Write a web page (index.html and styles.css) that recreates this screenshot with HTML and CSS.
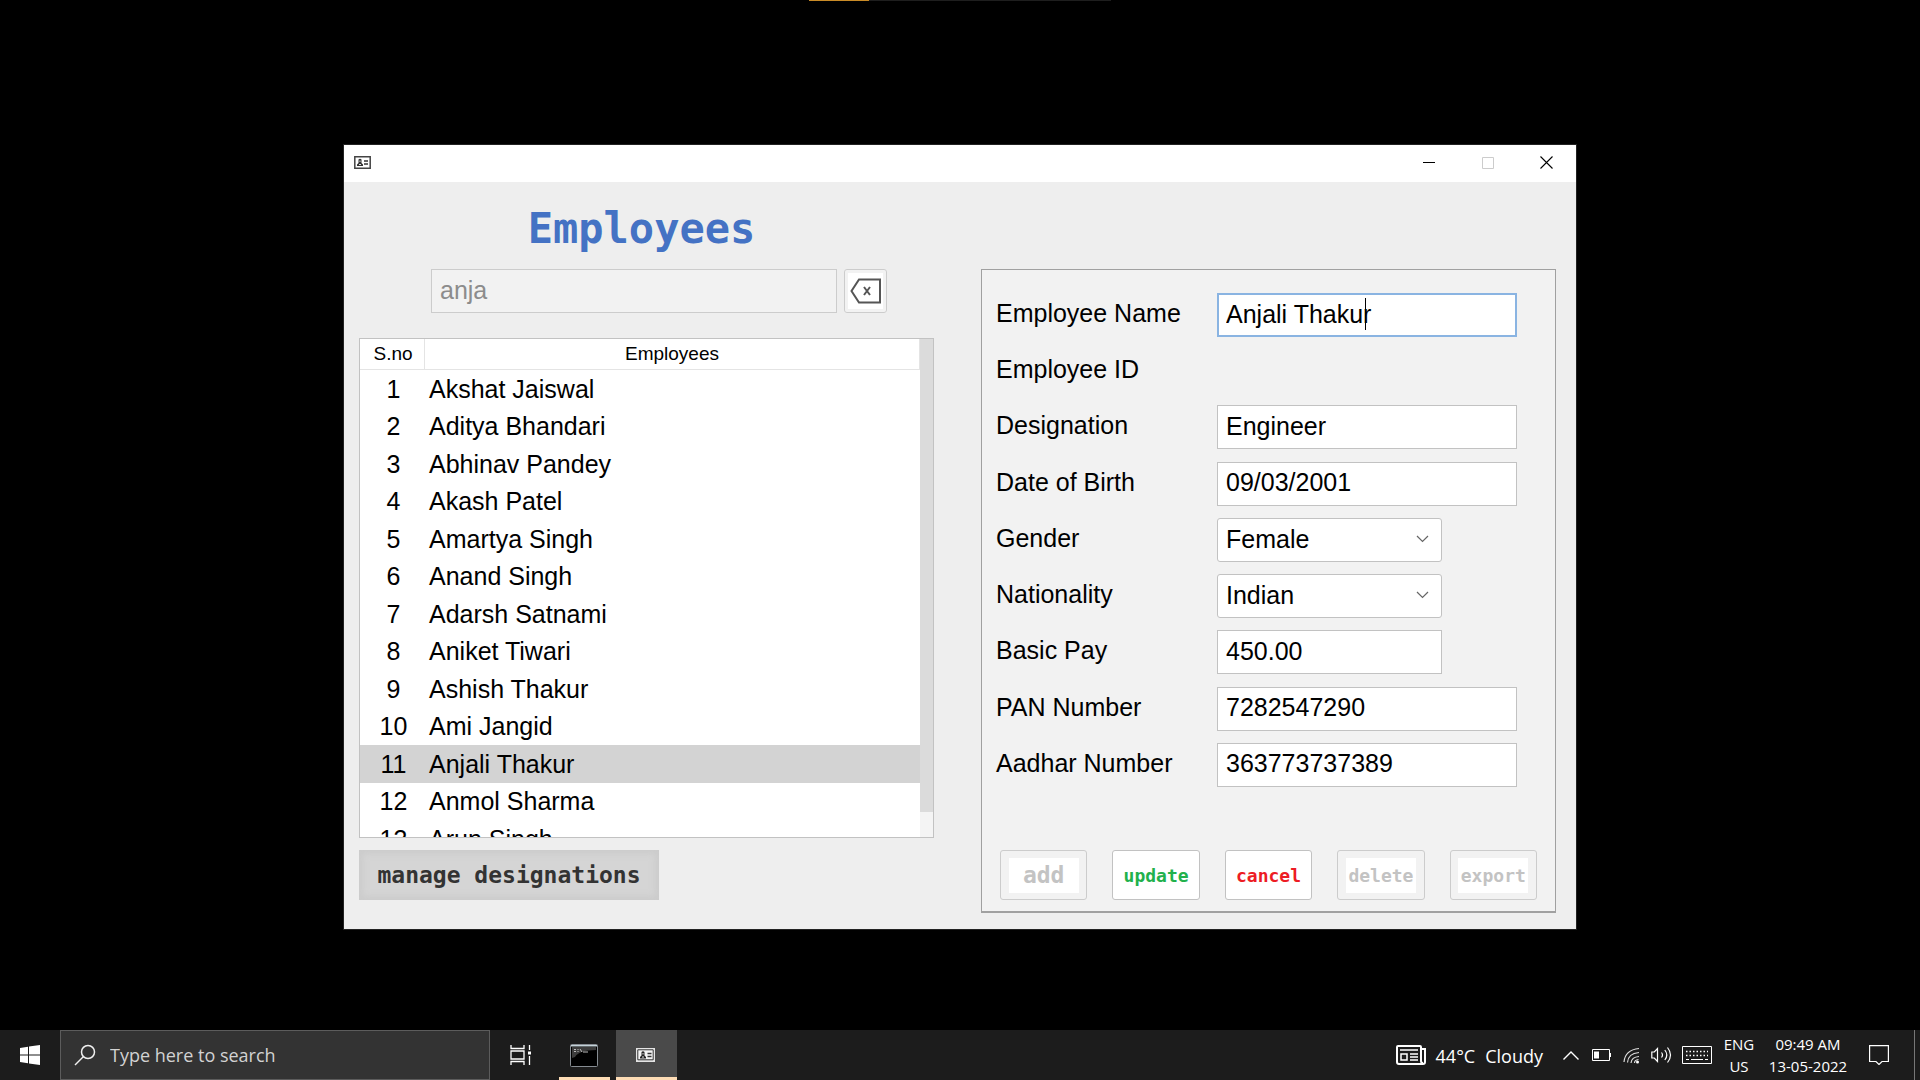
FILE: index.html
```html
<!DOCTYPE html>
<html lang="en">
<head>
<meta charset="utf-8">
<title>Employees</title>
<link rel="stylesheet" href="styles.css">
</head>
<body>
<div class="progress"><span class="progress-value"></span></div>
<main class="desktop">
  <section class="window">
    <header class="titlebar">
      <svg class="app-icon" width="17" height="13" viewBox="0 0 17 13"><path d="M.8.800h15.400v11.400H.8z" fill="#fff" stroke="#444" stroke-width="1.500"/><path d="M3 10V8.500L4.500 7V3.500Q6 2 7.500 3.500V7L9 8.500V10z" fill="#333"/><path d="M5.500 4.500h1v1.500h-1zM5 8h2v1H5z" fill="#ddd"/><path d="M10 5h4M10 8h4" stroke="#333" stroke-width="1.500"/></svg>
      <div class="window-controls">
        <button type="button" aria-label="Minimize"><svg width="12" height="12" viewBox="0 0 12 12"><path d="M0 5.500h12" stroke="#000"/></svg></button>
        <button type="button" aria-label="Maximize" disabled><svg width="12" height="12" viewBox="0 0 12 12"><path d="M.5.5h11v11H.5z" fill="none" stroke="#ccc"/></svg></button>
        <button type="button" aria-label="Close"><svg width="13" height="13" viewBox="0 0 13 13"><path d="M.5.5l12 12M12.500.5l-12 12" stroke="#000" stroke-width="1.100"/></svg></button>
      </div>
    </header>
    <div class="content">
      <section class="list-side">
        <h1>Employees</h1>
        <form class="search">
          <input class="field" type="text" value="anja" aria-label="Search employees" disabled>
          <button class="clear" type="button" aria-label="Clear search"><svg width="32" height="26" viewBox="0 0 32 26" fill="none" stroke="#555" stroke-width="2"><path d="M9 1.500h21v23H9L1.500 13z"/><path d="M14 9l6 8M20 9l-6 8"/></svg></button>
        </form>
        <div class="list">
          <div class="list-view">
            <table>
              <thead><tr><th class="no" scope="col">S.no</th><th scope="col">Employees</th></tr></thead>
              <tbody>
                <tr><td class="no">1</td><td>Akshat Jaiswal</td></tr>
                <tr><td class="no">2</td><td>Aditya Bhandari</td></tr>
                <tr><td class="no">3</td><td>Abhinav Pandey</td></tr>
                <tr><td class="no">4</td><td>Akash Patel</td></tr>
                <tr><td class="no">5</td><td>Amartya Singh</td></tr>
                <tr><td class="no">6</td><td>Anand Singh</td></tr>
                <tr><td class="no">7</td><td>Adarsh Satnami</td></tr>
                <tr><td class="no">8</td><td>Aniket Tiwari</td></tr>
                <tr><td class="no">9</td><td>Ashish Thakur</td></tr>
                <tr><td class="no">10</td><td>Ami Jangid</td></tr>
                <tr class="selected"><td class="no">11</td><td>Anjali Thakur</td></tr>
                <tr><td class="no">12</td><td>Anmol Sharma</td></tr>
                <tr><td class="no">13</td><td>Arun Singh</td></tr>
              </tbody>
            </table>
          </div>
          <div class="scrollbar"><div class="thumb"></div></div>
        </div>
        <button class="manage" type="button">manage designations</button>
      </section>
      <form class="details">
        <div class="rows">
          <label for="name">Employee Name</label>
          <div class="editing"><input class="field focused" id="name" type="text" value="Anjali Thakur"><span class="caret"></span></div>
          <span>Employee ID</span><output></output>
          <label for="designation">Designation</label>
          <input class="field" id="designation" type="text" value="Engineer">
          <label for="dob">Date of Birth</label>
          <input class="field" id="dob" type="text" value="09/03/2001">
          <label for="gender">Gender</label>
          <div class="select short"><select class="field" id="gender"><option>Female</option></select><svg width="13" height="8" viewBox="0 0 13 8"><path d="M1 1l5.500 5.500L12 1" fill="none" stroke="#666" stroke-width="1.200"/></svg></div>
          <label for="nationality">Nationality</label>
          <div class="select short"><select class="field" id="nationality"><option>Indian</option></select><svg width="13" height="8" viewBox="0 0 13 8"><path d="M1 1l5.500 5.500L12 1" fill="none" stroke="#666" stroke-width="1.200"/></svg></div>
          <label for="pay">Basic Pay</label>
          <input class="field short" id="pay" type="text" value="450.00">
          <label for="pan">PAN Number</label>
          <input class="field" id="pan" type="text" value="7282547290">
          <label for="aadhar">Aadhar Number</label>
          <input class="field" id="aadhar" type="text" value="363773737389">
        </div>
        <div class="actions">
          <button class="add" type="button" disabled><span>add</span></button>
          <button class="update" type="button">update</button>
          <button class="cancel" type="button">cancel</button>
          <button type="button" disabled><span>delete</span></button>
          <button type="button" disabled><span>export</span></button>
        </div>
      </form>
    </div>
  </section>
</main>
<footer class="taskbar">
  <button class="start" type="button" aria-label="Start"><svg width="20" height="20" viewBox="0 0 20 20" fill="#fff"><path d="M0 3l8-1.200v7.700H0zM9 1.600L20 0v9.500H9zM0 10.500h8v7.700L0 17zM9 10.500h11V20L9 18.400z"/></svg></button>
  <label class="find">
    <svg width="22" height="22" viewBox="0 0 22 22" fill="none" stroke="#f0f0f0" stroke-width="1.500"><circle cx="14" cy="8" r="6.500"/><path d="M9.500 12.500L1 21"/></svg>
    <input type="text" placeholder="Type here to search" aria-label="Search">
  </label>
  <button class="task view" type="button" aria-label="Task view"><svg width="22" height="20" viewBox="0 0 22 20" fill="none" stroke="#fff" stroke-width="1.300"><path d="M1 0v3.500h13V0M1 20v-3.500h13V20M1 6h13v8H1zM19.500 0v5M19.500 11V20"/><path d="M18 6.500h3v3h-3z" fill="#fff" stroke="none"/></svg></button>
  <button class="task open" type="button" aria-label="Command prompt"><svg width="28" height="23" viewBox="0 0 28 23"><rect x=".5" y=".5" width="27" height="22" rx="1" fill="#000" stroke="#868c92"/><path d="M1 1h26v1.500H1z" fill="#c4d2d8"/><path d="M2 3h24v3Q9 6 5 13l-3 1z" fill="#3c3c3c"/><path d="M4 5.500h2M4 7.500h2M8 5v1M8 7v1M10 5l2 3M13 8h5" stroke="#bbb"/></svg></button>
  <button class="task open active" type="button" aria-label="Employees"><svg width="19" height="14" viewBox="0 0 19 14"><path d="M0 0h19v14H0z" fill="#e4e4e4"/><path d="M1.800 1.800h15.400v10H1.800z" fill="#f4f4f4" stroke="#333"/><path d="M4 10.500V9l1.500-1.500V4Q7 2.500 8.500 4v3.500L10 9v1.500z" fill="#222"/><path d="M6.500 5h1v1.500h-1zM6 8.500h2v1H6z" fill="#ddd"/><path d="M11.500 5.500h4M11.500 8.500h4" stroke="#333" stroke-width="1.300"/></svg></button>
  <div class="tray">
    <a class="weather" href="#"><svg width="30" height="20" viewBox="0 0 30 20" fill="none" stroke="#fff" stroke-width="2"><path d="M25 4V2q0-1-1-1H2Q1 1 1 2v15q0 2 2 2h24q2 0 2-2V4h-4v12q0 2 2 2"/><path d="M4 5h18M14 9h8M14 12h8M14 15h8M5 9h6v6H5z" stroke-width="1.500"/></svg><span>44°C</span><span>Cloudy</span></a>
    <svg class="chevron" width="16" height="9" viewBox="0 0 16 9" fill="none" stroke="#fff" stroke-width="1.400"><path d="M.5 8.500L8 1l7.500 7.500"/></svg>
    <svg class="battery" width="20" height="12" viewBox="0 0 20 12" fill="none" stroke="#fff"><path d="M.5.5h17v11H.5zM18.500 4v4"/><path d="M2 2.500h5v7H2z" fill="#fff" stroke="none"/></svg>
    <svg class="wifi" width="17" height="17" viewBox="0 0 17 17" fill="none" stroke="#ddd" stroke-width="1.200"><path d="M1 15Q2 3 16 1.500M4.500 15.500Q5 6.500 16 5.500M8 16Q8.500 10 16 9.500"/><path d="M11.500 16q0-3 4-3.500"/><circle cx="14.500" cy="15" r="1.500" fill="#fff" stroke="none"/></svg>
    <svg class="sound" width="21" height="18" viewBox="0 0 21 18" fill="none" stroke="#fff" stroke-width="1.200"><path d="M.8 6h2.500L6.500 2.500v13L3.300 12H.8zM10.500 6.500q2 2.500 0 5M13.800 4q4 5 0 10M16.500 1.500q6 7.500 0 15"/></svg>
    <svg class="keyboard" width="30" height="18" viewBox="0 0 30 18" fill="none" stroke="#fff"><path d="M.5.5h29v17H.5z"/><path d="M4 5.500h22M4 9.500h22" stroke-width="1.300" stroke-dasharray="1.500 2"/><path d="M4 13.500h3M9 13.500h12M23 13.500h3"/></svg>
    <div class="stack lang"><span>ENG</span><span>US</span></div>
    <div class="stack clock"><span>09:49 AM</span><span>13-05-2022</span></div>
    <button class="notes" type="button" aria-label="Notifications"><svg width="20" height="20" viewBox="0 0 20 20" fill="none" stroke="#fff" stroke-width="1.200"><path d="M.6.6h18.800v15.900H13l-3 3-3-3H.6z"/></svg></button>
    <span class="peek"></span>
  </div>
</footer>
</body>
</html>
```
FILE: styles.css
```css
* { box-sizing: border-box; }
body {
  margin: 0;
  min-height: 100vh;
  display: flex;
  flex-direction: column;
  background: #000;
  color: #000;
  font-family: "Liberation Sans", Arial, sans-serif;
  font-size: 25px;
}
button, input, select { font: inherit; color: inherit; margin: 0; }
button { padding: 0; border: 0; background: none; }
svg { display: block; flex: none; }

.progress { display: flex; width: 302px; height: 1px; margin: 0 auto; background: #1e1e1e; }
.progress-value { width: 20%; background: #c98b27; }

.desktop { flex: 1; padding: 143px 32px 64px; }
.window {
  width: 100%;
  max-width: 1234px;
  margin: 0 auto;
  background: #eee;
  border: 1px solid #222;
}
.titlebar {
  display: flex;
  align-items: center;
  justify-content: space-between;
  height: 37px;
  padding-left: 10px;
  background: #fff;
}
.titlebar > svg, .window-controls svg { margin-bottom: 2px; }
.window-controls { display: flex; height: 100%; }
.window-controls button { display: grid; place-items: center; width: 59px; }

.content {
  display: grid;
  grid-template-columns: 575fr 575fr;
  gap: 47px;
  padding: 20px 20px 16px 15px;
}
.list-side { display: flex; flex-direction: column; }
h1 {
  margin: 0;
  padding-right: 10px;
  font: bold 42px/54px "DejaVu Sans Mono", monospace;
  text-align: center;
  color: #4472c4;
}
.search { display: flex; gap: 7px; margin: 13px 47px 25px 72px; }
.search .field { flex: 1; background: #f2f2f2; color: #8c8c8c; border-color: #ccc; }
.clear {
  display: grid;
  place-items: center;
  width: 43px;
  height: 44px;
  border: 1px solid #ccc;
  border-radius: 3px;
  background: #fff;
  box-shadow: inset 0 0 0 3px #f2f2f2;
}

.field {
  min-width: 0;
  width: 100%;
  height: 44px;
  padding: 0 8px 2px;
  border: 1px solid #c2c2c2;
  border-radius: 0;
  background: #fff;
  outline: 0;
}
.short { max-width: 225px; }
.focused { border: 2px solid #8ab4e2; padding: 0 7px 2px; }
.editing, .select { position: relative; }
.caret { position: absolute; left: 148px; top: 5px; width: 1px; height: 32px; background: #000; }
.select { width: 100%; }
.select .field { appearance: none; border-radius: 3px; display: block; }
.select svg { position: absolute; right: 13px; top: 17px; pointer-events: none; }

.list { display: flex; height: 500px; border: 1px solid #c2c2c2; background: #fff; }
.list-view { flex: 1; overflow: hidden; }
table { width: 100%; border-collapse: separate; border-spacing: 0; table-layout: fixed; }
th {
  height: 31px;
  padding: 0;
  font-size: 19px;
  font-weight: normal;
  line-height: 30px;
  border-right: 1px solid #e4e4e4;
  border-bottom: 1px solid #e4e4e4;
}
.no { width: 65px; text-align: center; }
td { padding: 0 0 0 4px; height: 37px; line-height: 37px; }
td.no, th.no { padding: 0 0 0 2px; }
tr:nth-child(odd) td { height: 38px; }
.selected { background: #d3d3d3; }
.scrollbar { width: 13px; background: #f4f4f4; }
.thumb { height: 95%; background: #dbdbdb; }

.manage {
  align-self: flex-start;
  width: 300px;
  height: 50px;
  margin-top: 12px;
  background: #d5d5d5;
  box-shadow: inset 0 0 6px 4px #ccc;
  color: #333;
  font: bold 23px/50px "DejaVu Sans Mono", monospace;
}

.details {
  display: flex;
  flex-direction: column;
  justify-content: space-between;
  margin-top: 67px;
  height: 644px;
  padding: 23px 18px 11px 14px;
  background: #f2f2f2;
  border: 1px solid #a0a0a0;
  border-bottom-width: 2px;
}
.rows {
  display: grid;
  grid-template-columns: 221px minmax(0, 300px);
  grid-auto-rows: 1fr;
  row-gap: 12px;
  min-height: 494px;
  line-height: 40px;
}
.actions { display: grid; grid-template-columns: repeat(5, 1fr); gap: 25px; padding-left: 4px; }
.actions button {
  display: grid;
  place-items: center;
  height: 50px;
  border: 1px solid #c2c2c2;
  border-radius: 3px;
  background: #fff;
  font: bold 18px/35px "DejaVu Sans Mono", monospace;
}
.actions button:disabled { background: #f2f2f2; color: #c3c3c3; border-color: #ccc; }
.actions span { width: 70px; height: 35px; background: #fff; }
.actions .add { font-size: 23px; }
.actions .update { color: #22b14c; }
.actions .cancel { color: #ed1c24; }

.taskbar {
  display: flex;
  align-items: center;
  height: 50px;
  background: #1c1c1c;
  color: #fff;
  font-family: "Open Sans", "Noto Sans", sans-serif;
  font-size: 18px;
}
.start { display: grid; place-items: center; width: 60px; }
.find {
  display: flex;
  align-items: center;
  gap: 14px;
  width: 430px;
  height: 50px;
  padding: 0 13px;
  background: #333;
  border: 1px solid #5c5c5c;
}
.find input { flex: 1; min-width: 0; padding: 0; border: 0; background: none; outline: 0; }
.find input::placeholder { color: #d2d2d2; opacity: 1; }
.task { display: grid; place-items: center; width: 61px; height: 50px; margin-right: 2px; }
.open { width: 51px; padding-right: 2px; margin-right: 6px; box-shadow: inset 0 -3px #fddcb5; }
.view { margin-right: 8px; }
.active { width: 61px; background: #4a4a4a; }
.tray { display: flex; align-items: center; margin-left: auto; height: 100%; }
.weather { display: flex; align-items: center; gap: 10px; margin-right: 20px; padding-top: 1px; color: inherit; text-decoration: none; }
.chevron { margin-right: 13px; }
.battery, .wifi, .sound { margin-right: 11px; }
.sound { margin-right: 10px; }
.weather svg { margin-bottom: 1px; }
.stack { display: flex; flex-direction: column; text-align: center; font-size: 15px; line-height: 22px; }
.lang { width: 54px; }
.clock { width: 84px; }
.notes { margin: 0 25px 0 19px; }
.peek { width: 6px; height: 100%; border-left: 1px solid #777; }
```
